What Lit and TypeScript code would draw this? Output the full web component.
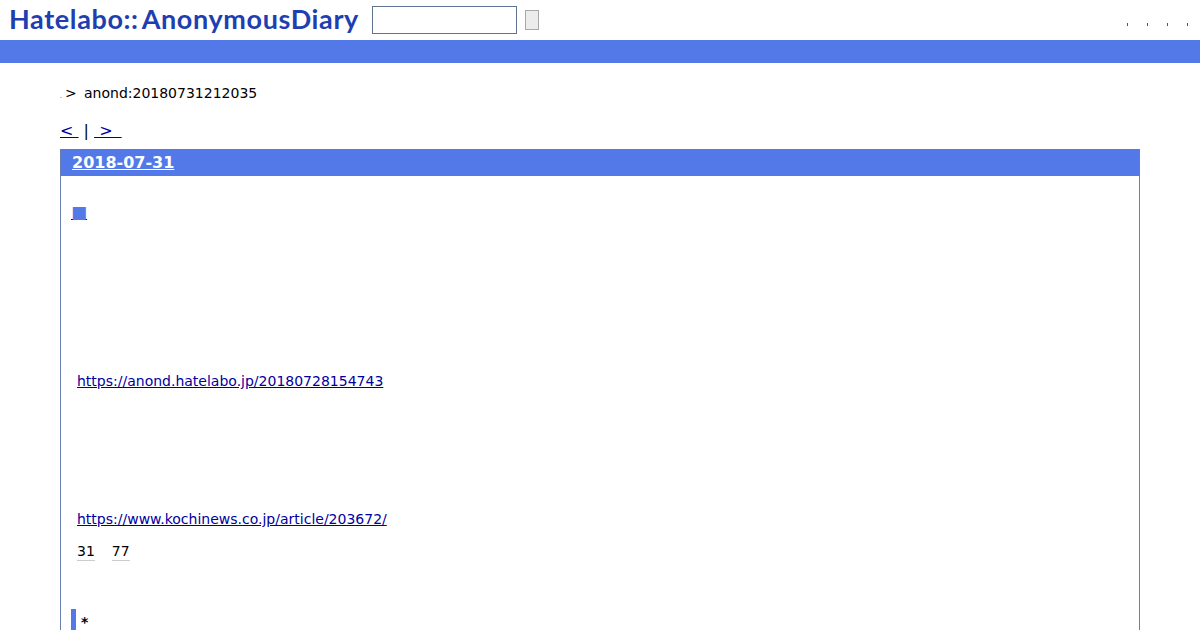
import { LitElement, css, html } from 'lit';
import { customElement } from 'lit/decorators.js';

@customElement('app-root')
export class AppRoot extends LitElement {
  static styles = css`
    :host {
      display: block;
      height: 630px;
      overflow: hidden;
      background: #fff;
      color: #000;
      font-family: 'DejaVu Sans', sans-serif;
      font-size: 14px;
    }

    a {
      color: #0000a0;
    }

    .top {
      display: flex;
      align-items: center;
      height: 40px;
      padding-left: 9px;
    }

    .logo {
      width: 349px;
      font-family: Lato, sans-serif;
      font-size: 27px;
      font-weight: 700;
      letter-spacing: 0.62px;
      line-height: 38px;
      margin-bottom: 2px;
      color: #1f3fb0;
      white-space: nowrap;
    }

    .logo span {
      margin-left: 3px;
    }

    .search {
      box-sizing: border-box;
      width: 145px;
      height: 28px;
      margin: 0 0 0 14px;
      border: 1px solid #5f7390;
      background: #fff;
    }

    .go {
      box-sizing: border-box;
      width: 14px;
      height: 20px;
      margin-left: 8px;
      padding: 0;
      border: 1px solid #a8a8a8;
      border-radius: 0;
      background: #ececec;
    }

    .dots {
      display: flex;
      gap: 19px;
      margin: 9px 12px 0 auto;
    }

    .dots span {
      width: 1px;
      height: 3px;
      background: #555;
    }

    .bar {
      height: 23px;
      background: #5279e7;
    }

    main {
      padding: 21px 60px 0;
    }

    .crumb {
      display: flex;
      align-items: baseline;
      height: 18px;
      line-height: 18px;
    }

    .crumb .home {
      width: 5px;
      font-size: 6px;
    }

    .crumb .sep {
      width: 19px;
    }

    .pager {
      margin-top: 20px;
      height: 18px;
      line-height: 18px;
      font-size: 16px;
      white-space: pre;
    }

    .day {
      margin-top: 9px;
      border: 1px solid #6a7fb0;
      border-top: 0;
      height: 600px;
    }

    .day h2 {
      margin: 0;
      height: 27px;
      padding-left: 11px;
      background: #5279e7;
      font-size: 16px;
      font-weight: 700;
      line-height: 27px;
    }

    .day h2 a {
      color: #fff;
    }

    .section {
      height: 28px;
      margin: 22px 0 0 10px;
      line-height: 28px;
    }

    .section a {
      color: #5279e7;
      font-size: 17px;
      text-decoration-color: #0000a0;
    }

    .link {
      margin: 0 0 0 16px;
      height: 18px;
      line-height: 18px;
    }

    .first {
      margin-top: 146px;
    }

    .second {
      margin-top: 120px;
    }

    .stats {
      display: flex;
      gap: 17px;
      margin: 14px 0 0 16px;
      line-height: 18px;
    }

    .stats span {
      border-bottom: 1px solid #ccc;
    }

    .sub {
      margin: 48px 0 0 10px;
      padding-left: 5px;
      border-left: 5px solid #5279e7;
      height: 40px;
      line-height: 26px;
      font-weight: 700;
    }
  `;

  render() {
    return html`
      <div class="top">
        <div class="logo">Hatelabo::<span>AnonymousDiary</span></div>
        <input class="search" type="text" />
        <button class="go"></button>
        <div class="dots"><span></span><span></span><span></span><span></span></div>
      </div>
      <div class="bar"></div>
      <main>
        <div class="crumb">
          <span class="home">.</span><span class="sep">&gt;</span><span>anond:20180731212035</span>
        </div>
        <div class="pager"><a href="#">&lt; </a> | <a href="#"> &gt; \u2005</a></div>
        <div class="day">
          <h2><a href="#">2018-07-31</a></h2>
          <div class="section"><a href="#">■</a></div>
          <div class="link first"><a href="#">https://anond.hatelabo.jp/20180728154743</a></div>
          <div class="link second"><a href="#">https://www.kochinews.co.jp/article/203672/</a></div>
          <div class="stats"><span>31</span><span>77</span></div>
          <div class="sub">*</div>
        </div>
      </main>
    `;
  }
}
